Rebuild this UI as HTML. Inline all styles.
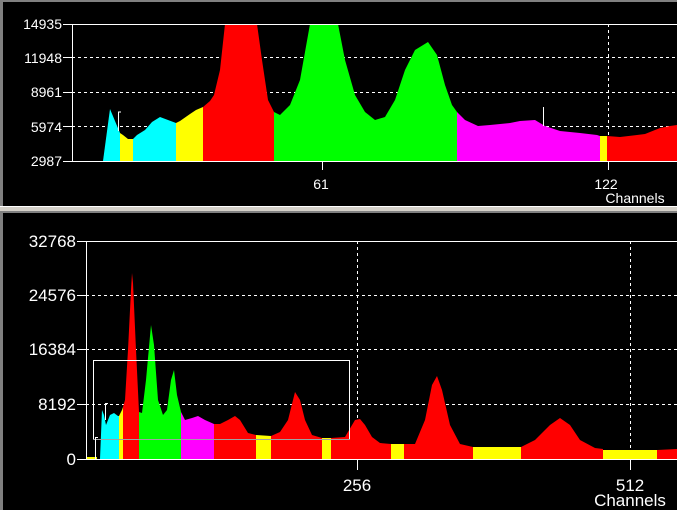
<!DOCTYPE html>
<html><head><style>
html,body{margin:0;padding:0;background:#000;width:677px;height:510px;overflow:hidden}
text{font-family:"Liberation Sans",sans-serif;fill:#fff}
</style></head><body>
<svg width="677" height="510" viewBox="0 0 677 510" xmlns="http://www.w3.org/2000/svg">
<rect width="677" height="510" fill="#000"/>
<rect x="0" y="0" width="677" height="2" fill="#808080"/>
<rect x="0" y="0" width="3" height="207" fill="#808080"/>
<rect x="0" y="206" width="677" height="7" fill="#d4d0c8"/>
<rect x="0" y="206" width="677" height="1" fill="#fff"/>
<rect x="0" y="211" width="677" height="2" fill="#808080"/>
<rect x="0" y="213" width="3" height="297" fill="#808080"/>

<g stroke="#fff" stroke-width="1" stroke-dasharray="3,3" fill="none">
<line x1="72" y1="57.5" x2="677" y2="57.5"/>
<line x1="72" y1="92.5" x2="677" y2="92.5"/>
<line x1="72" y1="126.5" x2="677" y2="126.5"/>
<line x1="608.5" y1="24" x2="608.5" y2="161"/>
</g>
<polygon fill="#00ffff" points="103,161 110,109 120,133 120,161"/>
<polygon fill="#ffff00" points="120,133 123,135 128,139 133,139 133,161 120,161"/>
<polygon fill="#00ffff" points="133,139 137,135 145,130 152,122 160,117 168,120 176,123 176,161 133,161"/>
<polygon fill="#ffff00" points="176,123 180,121 190,114 196,110 203,107 203,161 176,161"/>
<polygon fill="#ff0000" points="203,107 210,101 214,95 220,70 225,24 257,24 262,60 268,100 274,112 274,161 203,161"/>
<polygon fill="#00ff00" points="274,112 280,115 290,105 300,80 310,24 338,24 345,60 355,95 365,112 375,120 385,117 395,100 405,70 415,50 428,42 437,55 445,85 452,105 457,112 457,161 274,161"/>
<polygon fill="#ff00ff" points="457,112 465,120 478,126 490,125 510,123 520,121 535,120 545,126 560,131 580,133 597,135 600,136 600,161 457,161"/>
<polygon fill="#ffff00" points="600,136 607,136 607,161 600,161"/>
<polygon fill="#ff0000" points="607,136 620,137 645,134 660,128 670,126 677,125 677,161 607,161"/>
<g stroke="#fff" fill="none">
<line x1="72" y1="24.5" x2="677" y2="24.5"/>
<line x1="72.5" y1="24" x2="72.5" y2="162"/>
<line x1="72" y1="161.5" x2="677" y2="161.5"/>
<line x1="322.5" y1="162" x2="322.5" y2="170"/>
<line x1="608.5" y1="162" x2="608.5" y2="170"/>
<polyline points="121,112 118.5,112 118.5,131"/>
<line x1="543.5" y1="107" x2="543.5" y2="126"/>
<line x1="63" y1="24.5" x2="72" y2="24.5"/><line x1="63" y1="57.5" x2="72" y2="57.5"/><line x1="63" y1="92.5" x2="72" y2="92.5"/><line x1="63" y1="126.5" x2="72" y2="126.5"/><line x1="63" y1="161.5" x2="72" y2="161.5"/>
</g>
<g font-size="14" text-anchor="end">
<text x="62" y="29">14935</text>
<text x="62" y="63">11948</text>
<text x="62" y="97">8961</text>
<text x="62" y="132">5974</text>
<text x="62" y="166">2987</text>
</g>
<g font-size="14" text-anchor="middle">
<text x="321" y="189">61</text>
<text x="606" y="189">122</text>
<text x="635" y="203">Channels</text>
</g>

<g stroke="#fff" stroke-width="1" stroke-dasharray="3,3" fill="none">
<line x1="86" y1="295.5" x2="677" y2="295.5"/>
<line x1="86" y1="349.5" x2="677" y2="349.5"/>
<line x1="86" y1="404.5" x2="677" y2="404.5"/>
<line x1="357.5" y1="241" x2="357.5" y2="459"/>
<line x1="630.5" y1="241" x2="630.5" y2="459"/>
</g>
<polygon fill="#ffff00" points="86,459 86,457 97,457 97,459"/>
<polygon fill="#00ffff" points="100,459 102,410 104,415 106,425 110,415 114,413 118,416 119,416 119,459"/>
<polygon fill="#ffff00" points="119,416 122,410 123,407 123,459 119,459"/>
<polygon fill="#ff0000" points="123,407 125,400 128,350 131,290 132,273 133,283 136,350 139,412 139,459 123,459"/>
<polygon fill="#00ff00" points="139,412 142,413 146,380 151,325 154,345 158,400 163,415 167,410 171,380 174,370 177,395 181,412 181,459 139,459"/>
<polygon fill="#ff00ff" points="181,412 185,420 192,418 198,416 205,420 214,424 214,459 181,459"/>
<polygon fill="#ff0000" points="214,424 220,424 228,420 235,416 240,420 248,433 256,435 256,459 214,459"/>
<polygon fill="#ffff00" points="256,435 271,436 271,459 256,459"/>
<polygon fill="#ff0000" points="271,436 280,432 288,420 295,392 300,400 305,420 312,435 322,438 322,459 271,459"/>
<polygon fill="#ffff00" points="322,438 331,438 331,459 322,459"/>
<polygon fill="#ff0000" points="331,438 345,437 355,420 360,419 365,425 372,437 380,443 391,444 391,459 331,459"/>
<polygon fill="#ffff00" points="391,444 404,444 404,459 391,459"/>
<polygon fill="#ff0000" points="404,444 415,444 425,420 432,385 437,376 442,390 450,425 460,444 473,447 473,459 404,459"/>
<polygon fill="#ffff00" points="473,447 521,447 521,459 473,459"/>
<polygon fill="#ff0000" points="521,447 535,440 550,425 560,418 570,425 580,440 595,448 603,449 603,459 521,459"/>
<polygon fill="#ffff00" points="603,450 657,450 657,459 603,459"/>
<polygon fill="#ff0000" points="657,450 677,449 677,459 657,459"/>
<g stroke="#fff" fill="none">
<line x1="86" y1="241.5" x2="677" y2="241.5"/>
<line x1="86.5" y1="241" x2="86.5" y2="460"/>
<line x1="86" y1="459.5" x2="677" y2="459.5"/>
<line x1="357.5" y1="460" x2="357.5" y2="470"/>
<line x1="630.5" y1="460" x2="630.5" y2="470"/>
<rect x="93.5" y="360.5" width="256" height="79" stroke="#fff"/>
<line x1="93" y1="439.5" x2="350" y2="439.5" stroke="#a0a0a0"/>
<polyline points="98,437.5 95.5,437.5 95.5,459"/>
<polyline points="108,403.5 105.5,403.5 105.5,420"/>
<line x1="77" y1="241.5" x2="86" y2="241.5"/><line x1="77" y1="295.5" x2="86" y2="295.5"/><line x1="77" y1="349.5" x2="86" y2="349.5"/><line x1="77" y1="404.5" x2="86" y2="404.5"/><line x1="77" y1="459.5" x2="86" y2="459.5"/>
</g>
<g font-size="17" text-anchor="end">
<text x="76" y="247">32768</text>
<text x="76" y="301">24576</text>
<text x="76" y="355">16384</text>
<text x="76" y="410">8192</text>
<text x="76" y="465">0</text>
</g>
<g font-size="17" text-anchor="middle">
<text x="357" y="491">256</text>
<text x="630" y="491">512</text>
<text x="630" y="506">Channels</text>
</g>
</svg>
</body></html>
